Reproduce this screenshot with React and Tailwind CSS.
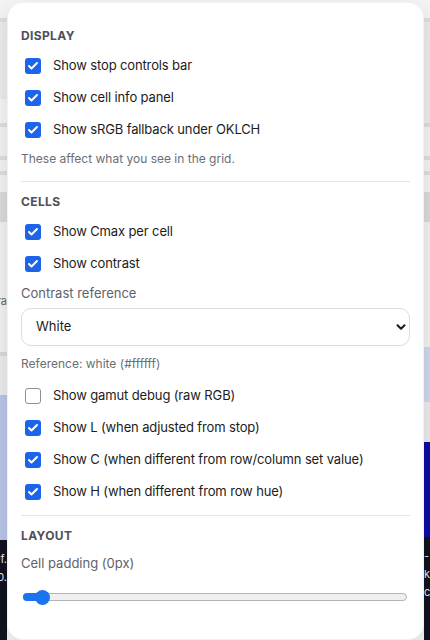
import { useState } from "react";
import { Check, ChevronDown } from "lucide-react";

// strips of the colour grid that peek out beside the settings popover
const leftBands = [
  { h: 18, c: "bg-[#f4f4f4]" },
  { h: 1, c: "bg-[#dedede]" },
  { h: 77, c: "bg-[#ececec]" },
  { h: 24, c: "bg-[#f5f5f5]" },
  { h: 1, c: "bg-[#dedede]" },
  { h: 29, c: "bg-[#f3f3f3]" },
  { h: 1, c: "bg-[#dedede]" },
  { h: 11, c: "bg-[#f3f3f3]" },
  { h: 1, c: "bg-[#dedede]" },
  { h: 17, c: "bg-[#f3f3f3]" },
  { h: 30, c: "bg-[#dadada]" },
  { h: 90, c: "bg-[#f1f1f1]", text: "Extra" },
  { h: 40, c: "bg-[#f1f1f1]" },
  { h: 1, c: "bg-[#d8d8d8]" },
  { h: 39, c: "bg-[#ebebeb]" },
  { h: 145, c: "bg-[#b9c5e8]" },
];

const rightBands = [
  { h: 18, c: "bg-[#f4f4f4]" },
  { h: 1, c: "bg-[#dedede]" },
  { h: 101, c: "bg-[#ececec]" },
  { h: 1, c: "bg-[#dedede]" },
  { h: 29, c: "bg-[#f3f3f3]" },
  { h: 1, c: "bg-[#dedede]" },
  { h: 11, c: "bg-[#f3f3f3]" },
  { h: 1, c: "bg-[#dedede]" },
  { h: 17, c: "bg-[#f3f3f3]" },
  { h: 30, c: "bg-[#dadada]" },
  { h: 125, c: "bg-[#f1f1f1]" },
  { h: 55, c: "bg-[#cfd7ee]" },
  { h: 40, c: "bg-[#ebebeb]" },
  { h: 95, c: "bg-[#0c0ca6]" },
];

function Strip({ bands, foot, align }) {
  return (
    <div className="flex h-full flex-col overflow-hidden">
      {bands.map((b, i) => (
        <div
          key={i}
          className={`${b.c} shrink-0 overflow-hidden whitespace-nowrap text-[11px] leading-[14px] text-[#666] flex items-end justify-end pb-1`}
          style={{ height: b.h }}
        >
          {b.text}
        </div>
      ))}
      <div
        className={`flex-1 bg-[#10121f] pt-[10px] text-[11px] leading-[18px] text-[#e5e7eb] whitespace-nowrap flex flex-col ${align}`}
      >
        {foot.map((t) => (
          <span key={t}>{t}</span>
        ))}
      </div>
    </div>
  );
}

function Box({ checked, onToggle }) {
  return (
    <button
      type="button"
      onClick={onToggle}
      className={
        checked
          ? "flex h-4 w-4 shrink-0 items-center justify-center rounded-[3px] bg-[#1d64ec]"
          : "h-4 w-4 shrink-0 rounded-[3px] border border-[#8f8f8f] bg-white"
      }
    >
      {checked && <Check size={12} strokeWidth={4} className="text-white" />}
    </button>
  );
}

function Toggle({ label, value, onChange }) {
  return (
    <label className="flex h-8 items-center gap-[12px] pl-1 cursor-pointer">
      <Box checked={value} onToggle={() => onChange(!value)} />
      <span className="text-[13px] tracking-[-0.01em] text-[#1c1c1c]">{label}</span>
    </label>
  );
}

function Heading({ children }) {
  return (
    <div className="text-[12px] font-bold uppercase leading-4 tracking-[0.03em] text-[#4d5059]">
      {children}
    </div>
  );
}

export default function App() {
  const [opts, setOpts] = useState({
    stopBar: true,
    cellInfo: true,
    fallback: true,
    cmax: true,
    contrast: true,
    gamut: false,
    showL: true,
    showC: true,
    showH: true,
  });
  const [reference, setReference] = useState("white");
  const [padding] = useState(0);

  const set = (key) => (v) => setOpts((o) => ({ ...o, [key]: v }));

  return (
    <div className="relative h-[640px] w-full overflow-hidden bg-[#f3f3f3] font-['Inter',sans-serif]">
      <div className="flex h-full">
        <div className="w-[7px] shrink-0">
          <Strip bands={leftBands} foot={["Ref.", "1.0."]} align="items-end" />
        </div>
        <div className="flex-1 bg-[#f5f5f5]" />
        <div className="w-[6px] shrink-0">
          <Strip bands={rightBands} foot={["-", "k", "c"]} align="items-start" />
        </div>
      </div>

      <div className="absolute left-[7px] top-[2px] h-[638px] w-[417px] rounded-2xl border border-black/5 bg-white px-[13px] pt-[25px] shadow-[0_6px_20px_rgba(0,0,0,0.12)]">
        <Heading>Display</Heading>
        <div className="mt-[6px]">
          <Toggle label="Show stop controls bar" value={opts.stopBar} onChange={set("stopBar")} />
          <Toggle label="Show cell info panel" value={opts.cellInfo} onChange={set("cellInfo")} />
          <Toggle label="Show sRGB fallback under OKLCH" value={opts.fallback} onChange={set("fallback")} />
        </div>
        <p className="mt-[5px] text-[12px] leading-4 text-[#6b6e75]">
          These affect what you see in the grid.
        </p>

        <div className="mt-[14px] border-t border-[#e4e4e7]" />

        <div className="mt-[12px]">
          <Heading>Cells</Heading>
        </div>
        <div className="mt-[6px]">
          <Toggle label="Show Cmax per cell" value={opts.cmax} onChange={set("cmax")} />
          <Toggle label="Show contrast" value={opts.contrast} onChange={set("contrast")} />
        </div>
        <div className="mt-[4px] text-[13px] leading-[18px] text-[#5f626a]">Contrast reference</div>
        <div className="relative mt-[6px]">
          <select
            value={reference}
            onChange={(e) => setReference(e.target.value)}
            className="h-[38px] w-full appearance-none rounded-[10px] border border-[#dcdcdf] bg-white pl-[14px] text-[13px] text-[#1c1c1c] outline-none"
          >
            <option value="white">White</option>
            <option value="black">Black</option>
          </select>
          <ChevronDown
            size={14}
            strokeWidth={3.5}
            className="pointer-events-none absolute right-[2px] top-[12px] text-[#1c1c1c]"
          />
        </div>
        <p className="mt-[10px] text-[12px] leading-4 text-[#6b6e75]">
          Reference: {reference} ({reference === "white" ? "#ffffff" : "#000000"})
        </p>

        <div className="mt-[8px]">
          <Toggle label="Show gamut debug (raw RGB)" value={opts.gamut} onChange={set("gamut")} />
          <Toggle label="Show L (when adjusted from stop)" value={opts.showL} onChange={set("showL")} />
          <Toggle label="Show C (when different from row/column set value)" value={opts.showC} onChange={set("showC")} />
          <Toggle label="Show H (when different from row hue)" value={opts.showH} onChange={set("showH")} />
        </div>

        <div className="mt-[7px] border-t border-[#e4e4e7]" />

        <div className="mt-[12px]">
          <Heading>Layout</Heading>
        </div>
        <div className="mt-[10px] text-[13px] leading-[18px] text-[#5f626a]">
          Cell padding ({padding}px)
        </div>

        <div className="relative mt-[17px] ml-[2px] mr-[3px] flex h-4 items-center">
          <div className="h-[8px] w-full rounded-full border border-[#b4b4b4] bg-[#efefef]" />
          <div className="absolute left-0 h-[8px] w-[20px] rounded-l-full bg-[#1a73f0]" />
          <div className="absolute left-[12px] h-[15px] w-[15px] rounded-full bg-[#1a73f0]" />
        </div>
      </div>
    </div>
  );
}
